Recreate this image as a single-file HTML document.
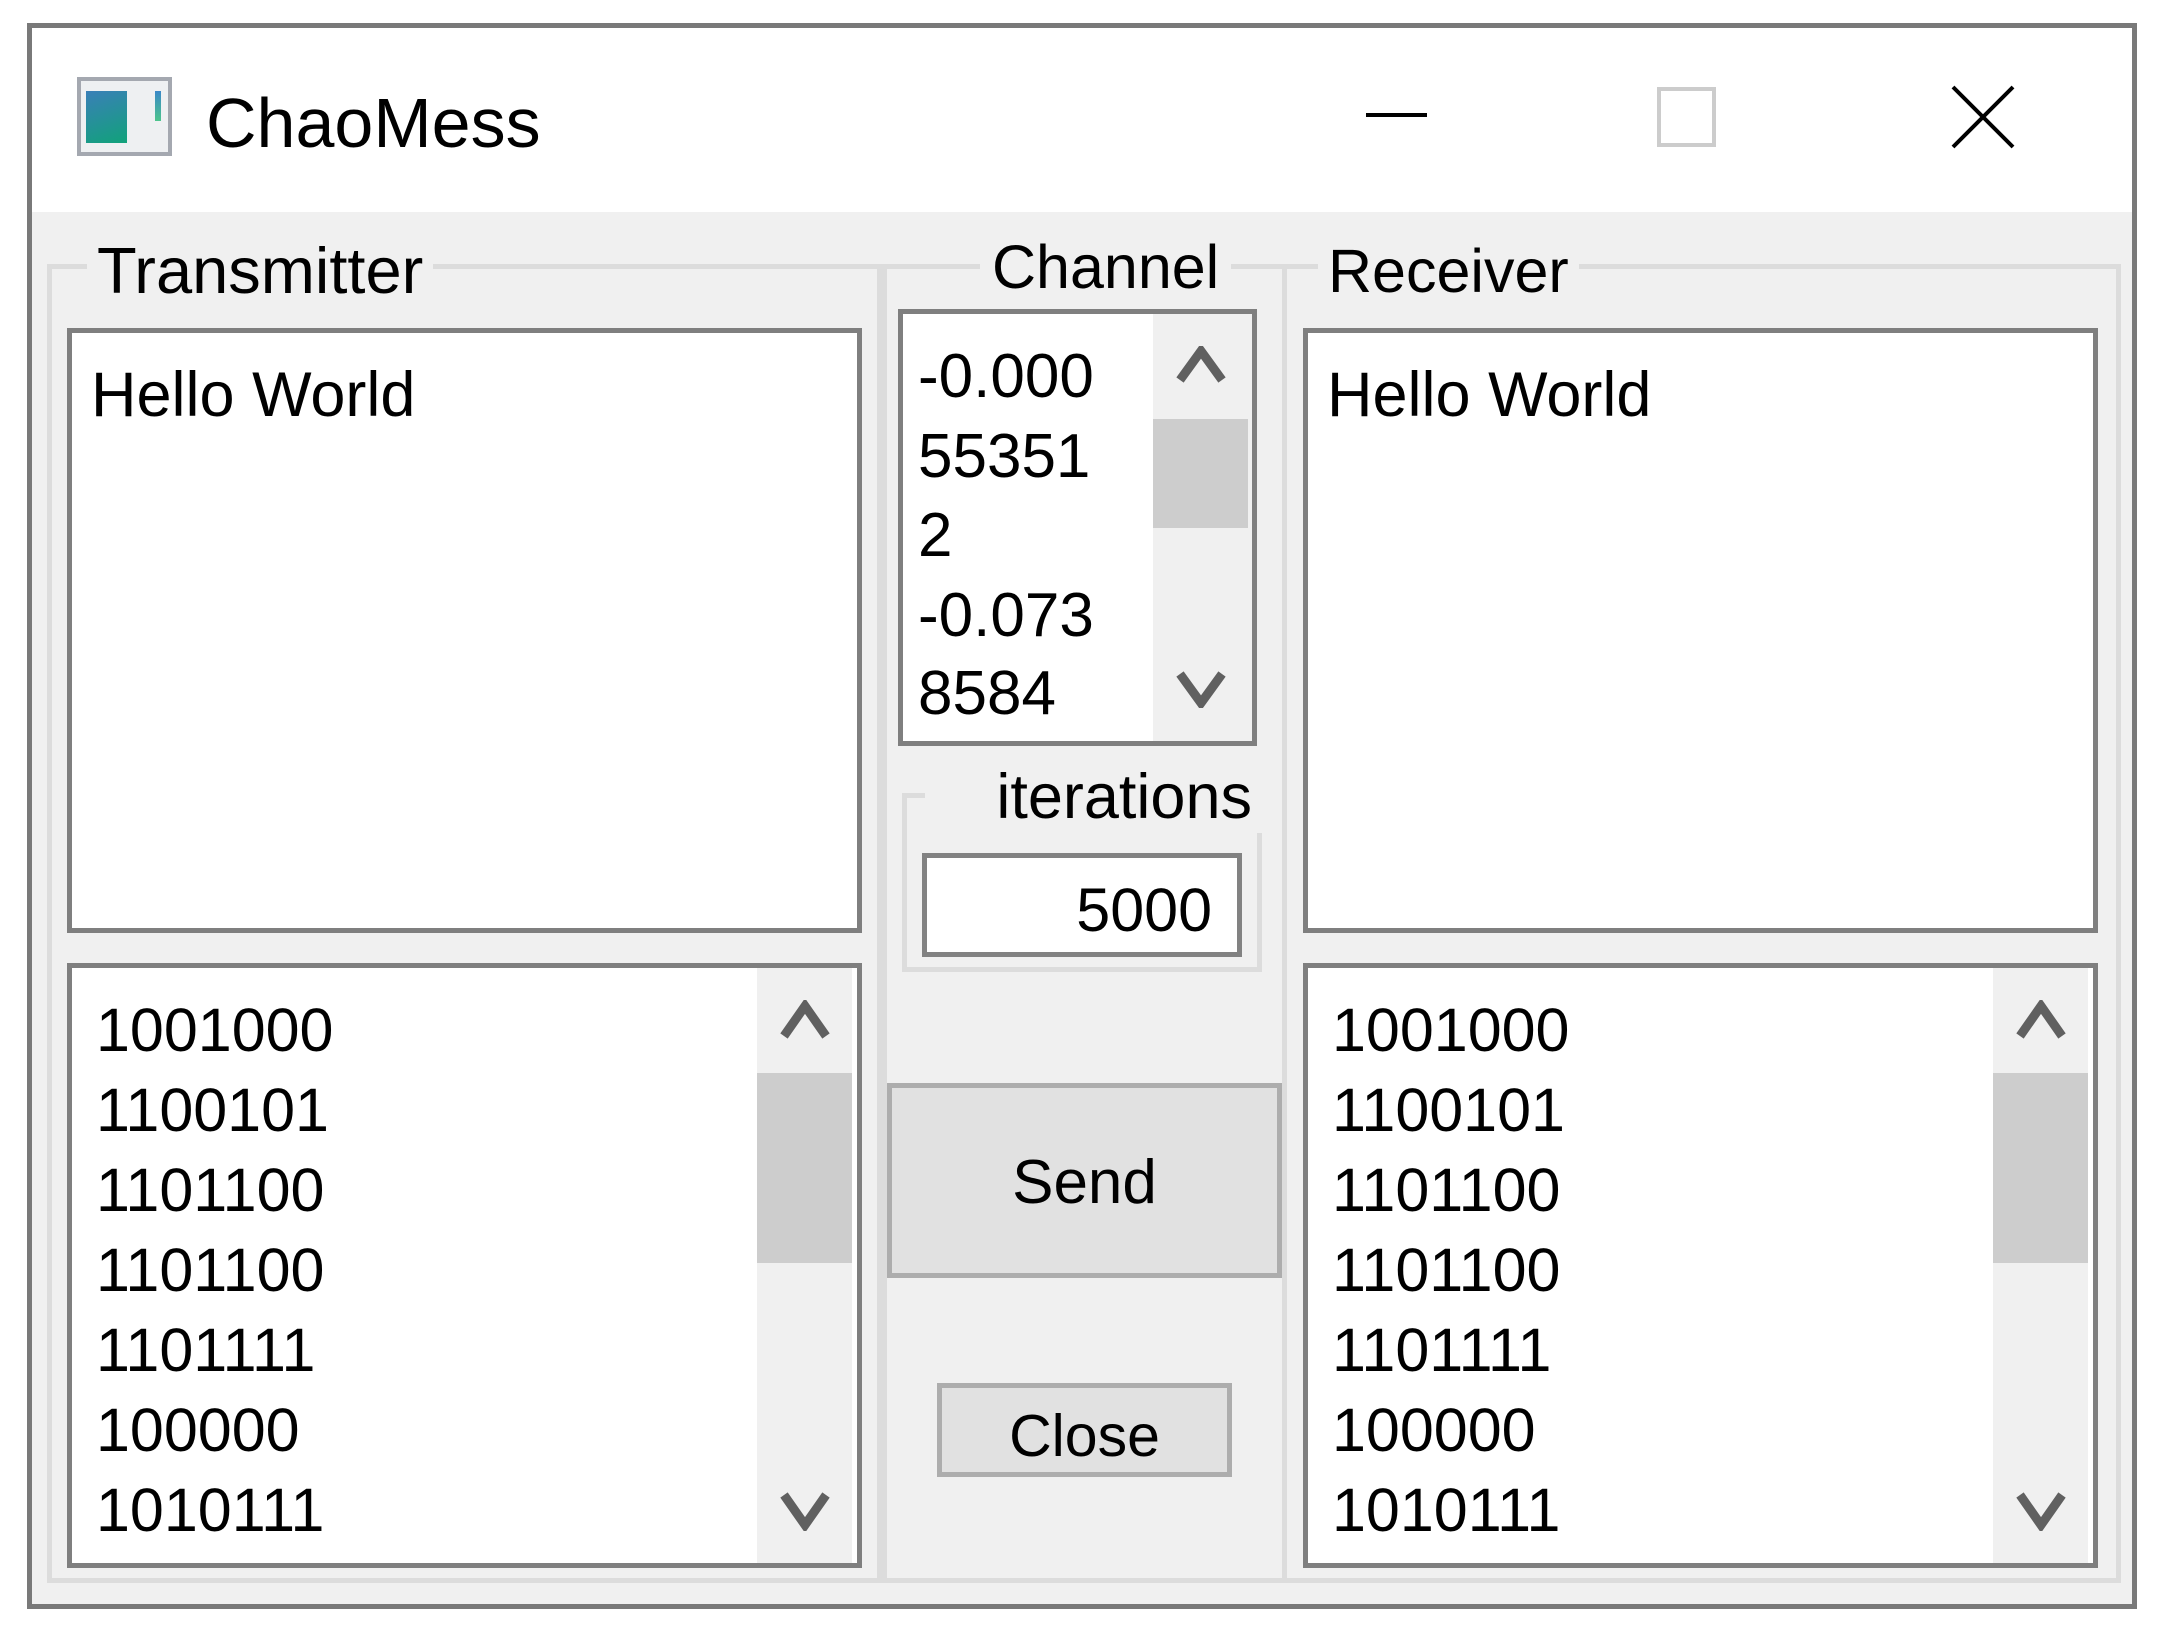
<!DOCTYPE html>
<html><head><meta charset="utf-8"><style>
*{margin:0;padding:0;box-sizing:border-box}
html,body{width:2159px;height:1630px;background:#fff;overflow:hidden;font-family:"Liberation Sans",sans-serif;color:#000}
.a{position:absolute}
.t{position:absolute;line-height:1;white-space:nowrap}
.gb{position:absolute;border:5px solid #dcdcdc}
.box{position:absolute;border:5px solid #7f7f7f;background:#fff;overflow:hidden}
.sb{position:absolute;background:#f0f0f0}
.thumb{position:absolute;background:#cdcdcd}
.btn{position:absolute;border:5px solid #adadad;background:#e1e1e1}
</style></head><body>
<!-- window -->
<div class="a" style="left:27px;top:23px;width:2110px;height:1586px;border:5px solid #797979;background:#f0f0f0"></div>
<div class="a" style="left:32px;top:28px;width:2100px;height:184px;background:#fff"></div>
<!-- icon -->
<div class="a" style="left:77px;top:77px;width:95px;height:79px;border:4px solid #a4a8b0;background:#eef0f2"></div>
<div class="a" style="left:86px;top:91px;width:41px;height:52px;background:linear-gradient(160deg,#3a7fb8,#11a27a)"></div>
<div class="a" style="left:155px;top:91px;width:6px;height:30px;background:linear-gradient(#3a88c8,#4cc48c)"></div>
<div class="t" style="left:206px;top:88px;font-size:70px">ChaoMess</div>
<!-- caption buttons -->
<div class="a" style="left:1366px;top:113px;width:61px;height:4px;background:#000"></div>
<div class="a" style="left:1657px;top:87px;width:59px;height:60px;border:4px solid #cccccc"></div>
<svg class="a" style="left:1950px;top:85px" width="66" height="64"><path d="M3 2 L63 62 M63 2 L3 62" stroke="#000" stroke-width="4"/></svg>

<!-- group boxes -->
<div class="gb" style="left:47px;top:264px;width:835px;height:1319px"></div>
<div class="gb" style="left:882px;top:264px;width:405px;height:1319px"></div>
<div class="gb" style="left:1282px;top:264px;width:839px;height:1319px"></div>
<div class="t" style="left:87px;top:238px;font-size:65px;background:#f0f0f0;padding:0 10px">Transmitter</div>
<div class="t" style="left:980px;top:237px;font-size:61px;background:#f0f0f0;padding:0 12px">Channel</div>
<div class="t" style="left:1318px;top:241px;font-size:61px;background:#f0f0f0;padding:0 10px">Receiver</div>

<!-- Transmitter -->
<div class="box" style="left:67px;top:328px;width:795px;height:605px"></div>
<div class="t" style="left:91px;top:364px;font-size:63px">Hello World</div>
<div class="box" style="left:67px;top:963px;width:795px;height:605px">
 <div class="sb" style="left:685px;top:0;width:95px;height:595px"></div>
 <div class="thumb" style="left:685px;top:105px;width:95px;height:190px"></div>
</div>
<svg class="a" style="left:780px;top:1000px" width="50" height="40"><polyline points="4,36 25,6 46,36" fill="none" stroke="#606060" stroke-width="9"/></svg>
<svg class="a" style="left:780px;top:1491px" width="50" height="40"><polyline points="4,4 25,34 46,4" fill="none" stroke="#606060" stroke-width="9"/></svg>
<div class="t" style="left:96px;top:1000px;font-size:61px">1001000</div>
<div class="t" style="left:96px;top:1080px;font-size:61px">1100101</div>
<div class="t" style="left:96px;top:1160px;font-size:61px">1101100</div>
<div class="t" style="left:96px;top:1240px;font-size:61px">1101100</div>
<div class="t" style="left:96px;top:1320px;font-size:61px">1101111</div>
<div class="t" style="left:96px;top:1400px;font-size:61px">100000</div>
<div class="t" style="left:96px;top:1480px;font-size:61px">1010111</div>

<!-- Channel -->
<div class="box" style="left:898px;top:309px;width:359px;height:437px">
 <div class="sb" style="left:250px;top:0;width:100px;height:427px"></div>
 <div class="thumb" style="left:250px;top:105px;width:95px;height:109px"></div>
</div>
<svg class="a" style="left:1176px;top:346px" width="50" height="38"><polyline points="4,34 25,5 46,34" fill="none" stroke="#606060" stroke-width="9"/></svg>
<svg class="a" style="left:1176px;top:670px" width="50" height="38"><polyline points="4,4 25,33 46,4" fill="none" stroke="#606060" stroke-width="9"/></svg>
<div class="t" style="left:918px;top:346px;font-size:62px">-0.000</div>
<div class="t" style="left:918px;top:426px;font-size:62px">55351</div>
<div class="t" style="left:918px;top:505px;font-size:62px">2</div>
<div class="t" style="left:918px;top:585px;font-size:62px">-0.073</div>
<div class="t" style="left:918px;top:663px;font-size:62px">8584</div>

<!-- iterations -->
<div class="gb" style="left:902px;top:793px;width:360px;height:179px"></div>
<div class="a" style="left:925px;top:760px;width:340px;height:73px;background:#f0f0f0"></div>
<div class="t" style="left:990px;top:766px;width:262px;text-align:right;font-size:63px">iterations</div>
<div class="box" style="left:922px;top:853px;width:320px;height:104px;border-color:#828282"></div>
<div class="t" style="left:930px;top:880px;width:282px;text-align:right;font-size:61px">5000</div>

<div class="btn" style="left:887px;top:1083px;width:395px;height:195px"></div>
<div class="t" style="left:887px;top:1152px;width:395px;text-align:center;font-size:62px">Send</div>
<div class="btn" style="left:937px;top:1383px;width:295px;height:94px"></div>
<div class="t" style="left:937px;top:1407px;width:295px;text-align:center;font-size:59px">Close</div>

<!-- Receiver -->
<div class="box" style="left:1303px;top:328px;width:795px;height:605px"></div>
<div class="t" style="left:1327px;top:364px;font-size:63px">Hello World</div>
<div class="box" style="left:1303px;top:963px;width:795px;height:605px">
 <div class="sb" style="left:685px;top:0;width:95px;height:595px"></div>
 <div class="thumb" style="left:685px;top:105px;width:95px;height:190px"></div>
</div>
<svg class="a" style="left:2016px;top:1000px" width="50" height="40"><polyline points="4,36 25,6 46,36" fill="none" stroke="#606060" stroke-width="9"/></svg>
<svg class="a" style="left:2016px;top:1491px" width="50" height="40"><polyline points="4,4 25,34 46,4" fill="none" stroke="#606060" stroke-width="9"/></svg>
<div class="t" style="left:1332px;top:1000px;font-size:61px">1001000</div>
<div class="t" style="left:1332px;top:1080px;font-size:61px">1100101</div>
<div class="t" style="left:1332px;top:1160px;font-size:61px">1101100</div>
<div class="t" style="left:1332px;top:1240px;font-size:61px">1101100</div>
<div class="t" style="left:1332px;top:1320px;font-size:61px">1101111</div>
<div class="t" style="left:1332px;top:1400px;font-size:61px">100000</div>
<div class="t" style="left:1332px;top:1480px;font-size:61px">1010111</div>
</body></html>
